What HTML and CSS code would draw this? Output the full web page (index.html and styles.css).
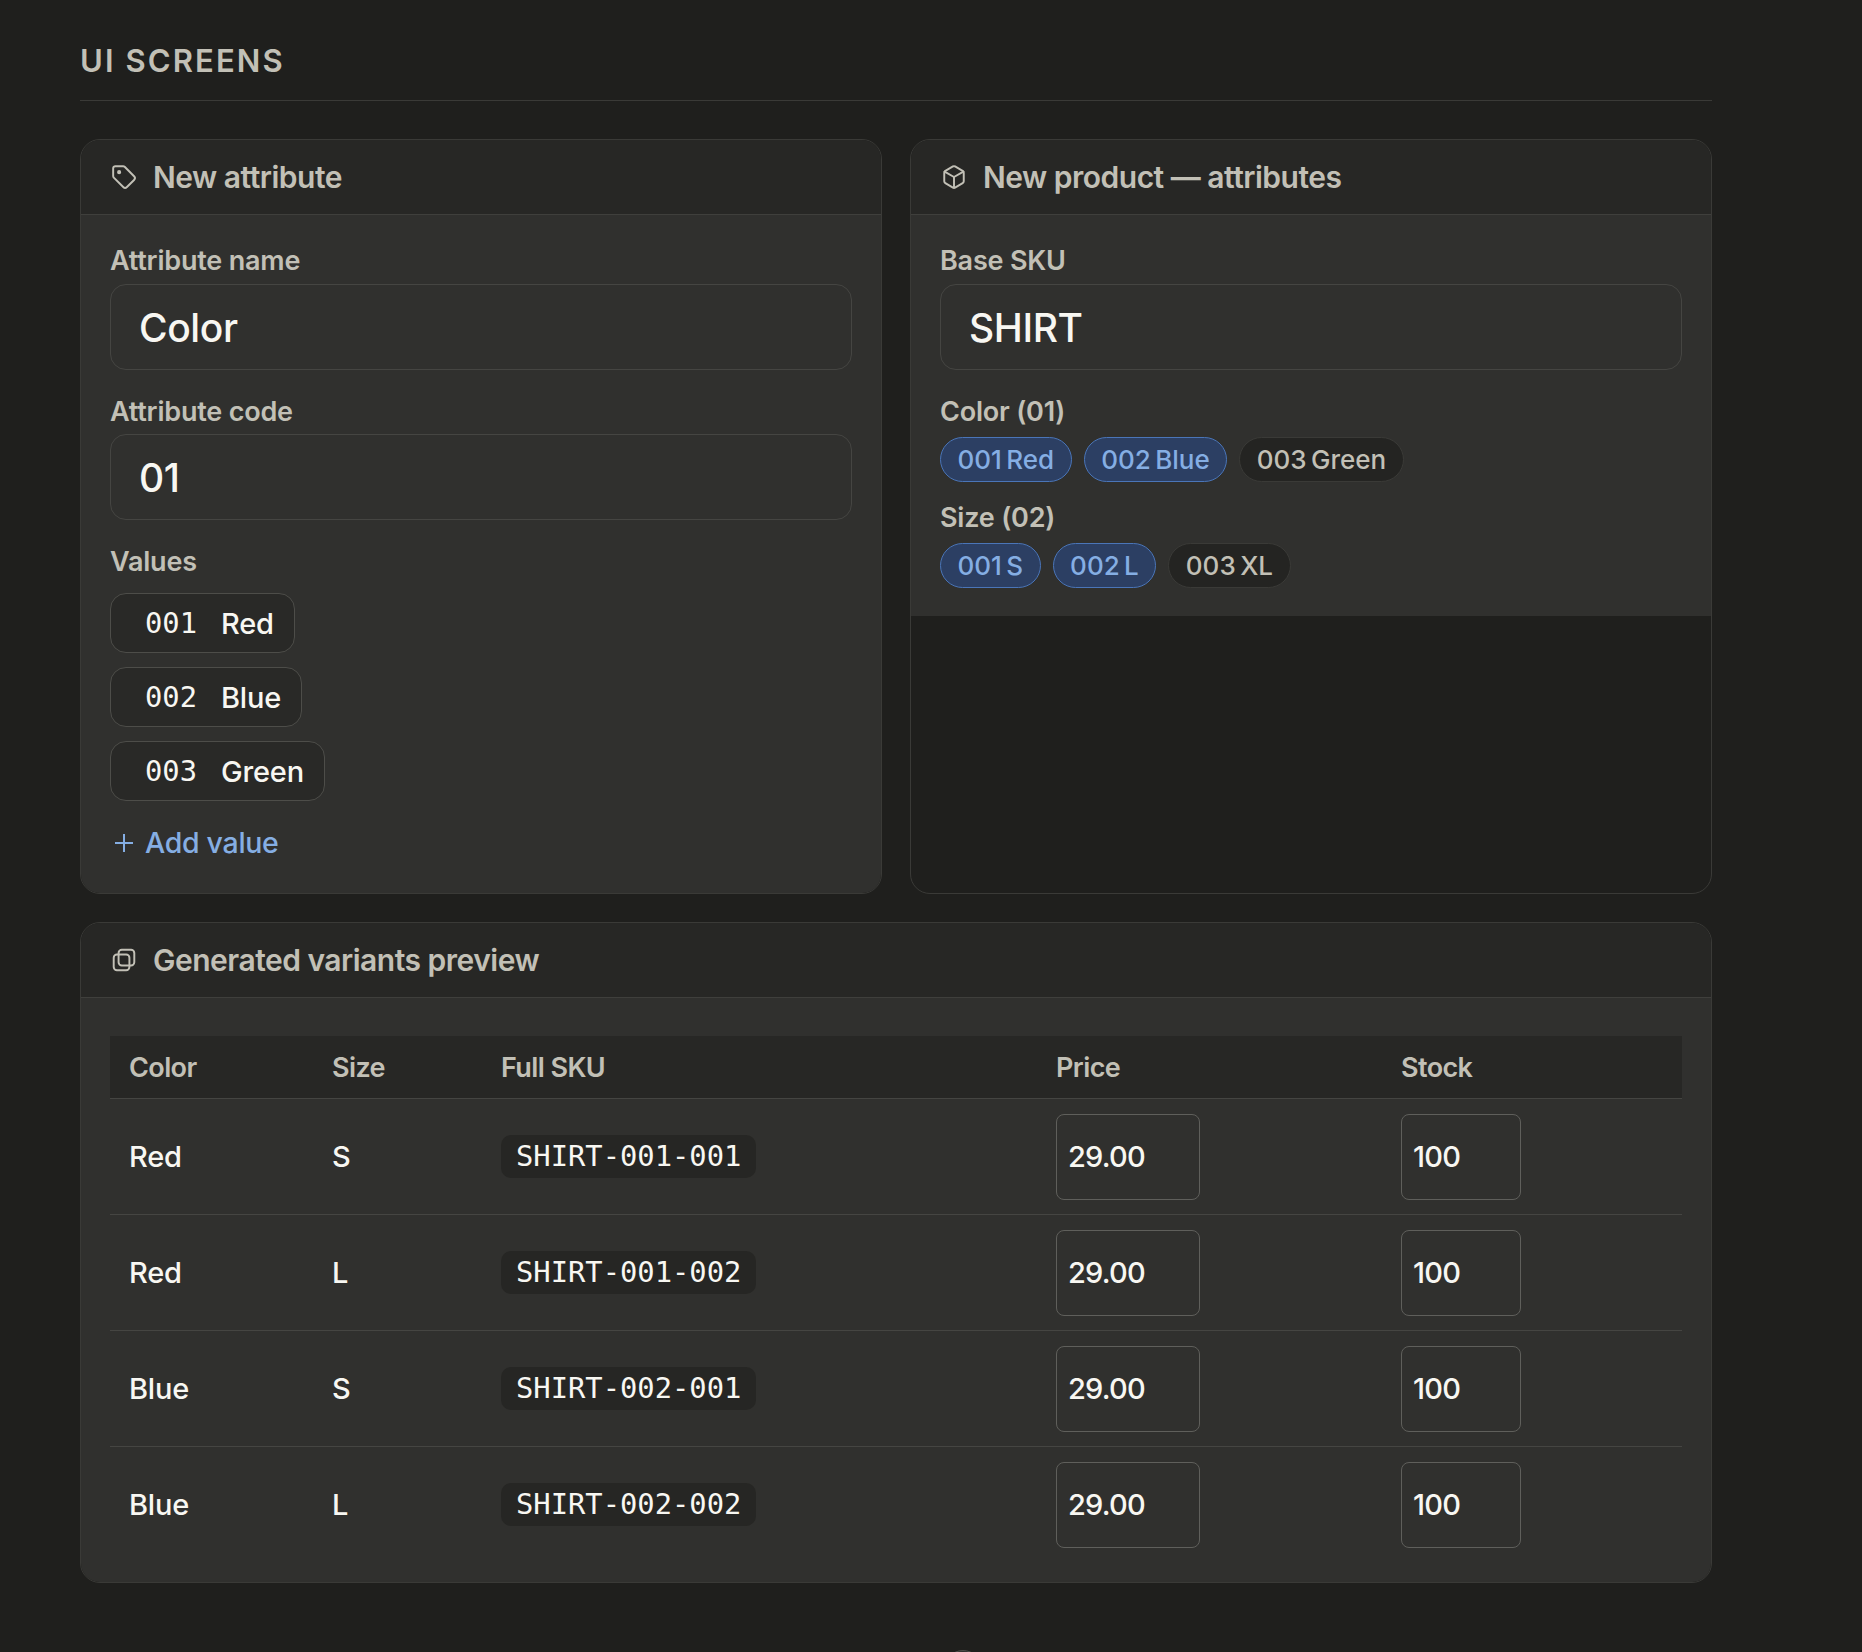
FILE: index.html
```html
<!DOCTYPE html>
<html lang="en">
<head>
  <meta charset="UTF-8">
  <title>UI screens</title>
  <link rel="stylesheet" href="styles.css">
</head>
<body>
  <h2 class="section-title">UI SCREENS</h2>

  <div class="two-col">
    <div class="card">
      <div class="card-head">
        <svg class="icon" viewBox="0 0 24 24"><path d="M12.586 2.586A2 2 0 0 0 11.172 2H4a2 2 0 0 0-2 2v7.172a2 2 0 0 0 .586 1.414l8.704 8.704a2.426 2.426 0 0 0 3.42 0l6.58-6.58a2.426 2.426 0 0 0 0-3.42z"/><circle class="dot" cx="7.500" cy="7.500" r="1"/></svg>
        New attribute
      </div>
      <div class="card-body">
        <label class="field-label">Attribute name</label>
        <div class="input">Color</div>
        <label class="field-label">Attribute code</label>
        <div class="input">01</div>
        <label class="field-label">Values</label>
        <div class="values">
          <div class="value-row"><code>001</code>Red</div>
          <div class="value-row"><code>002</code>Blue</div>
          <div class="value-row"><code>003</code>Green</div>
        </div>
        <div class="add-value"><svg viewBox="0 0 24 24"><path d="M12 3v18M3 12h18"/></svg>Add value</div>
      </div>
    </div>

    <div class="card">
      <div class="card-head">
        <svg class="icon" viewBox="0 0 24 24"><path d="M21 8a2 2 0 0 0-1-1.730l-7-4a2 2 0 0 0-2 0l-7 4A2 2 0 0 0 3 8v8a2 2 0 0 0 1 1.730l7 4a2 2 0 0 0 2 0l7-4A2 2 0 0 0 21 16Z"/><path d="m3.300 7 8.700 5 8.700-5"/><path d="M12 22V12"/></svg>
        New product — attributes
      </div>
      <div class="card-body">
        <label class="field-label">Base SKU</label>
        <div class="input">SHIRT</div>
        <label class="field-label">Color (01)</label>
        <div class="chips">
          <span class="chip on">001 Red</span>
          <span class="chip on">002 Blue</span>
          <span class="chip">003 Green</span>
        </div>
        <label class="field-label">Size (02)</label>
        <div class="chips">
          <span class="chip on">001 S</span>
          <span class="chip on">002 L</span>
          <span class="chip">003 XL</span>
        </div>
      </div>
    </div>
  </div>

  <div class="card wide">
    <div class="card-head">
      <svg class="icon" viewBox="0 0 24 24"><rect x="2.500" y="7" width="14.500" height="14.500" rx="3"/><rect x="7" y="2.500" width="14.500" height="14.500" rx="3"/></svg>
      Generated variants preview
    </div>
    <div class="card-body table-body">
      <table>
        <thead>
          <tr><th class="c1">Color</th><th class="c2">Size</th><th class="c3">Full SKU</th><th class="c4">Price</th><th>Stock</th></tr>
        </thead>
        <tbody>
          <tr><td>Red</td><td>S</td><td><code class="sku">SHIRT-001-001</code></td><td><div class="cell-input price">29.00</div></td><td><div class="cell-input stock">100</div></td></tr>
          <tr><td>Red</td><td>L</td><td><code class="sku">SHIRT-001-002</code></td><td><div class="cell-input price">29.00</div></td><td><div class="cell-input stock">100</div></td></tr>
          <tr><td>Blue</td><td>S</td><td><code class="sku">SHIRT-002-001</code></td><td><div class="cell-input price">29.00</div></td><td><div class="cell-input stock">100</div></td></tr>
          <tr><td>Blue</td><td>L</td><td><code class="sku">SHIRT-002-002</code></td><td><div class="cell-input price">29.00</div></td><td><div class="cell-input stock">100</div></td></tr>
        </tbody>
      </table>
    </div>
  </div>

  <div class="round-btn"></div>
</body>
</html>
```

FILE: styles.css
```css
html, body {
  margin: 0;
  background-color: #1f1f1d;
}

body {
  position: relative;
  width: 1632px;
  padding: 40px 150px 0 80px;
  height: 1612px;
  overflow: hidden;
  font-family: Inter, "Liberation Sans", sans-serif;
  color: #f8f7f2;
}

.section-title {
  margin: 0 0 38px;
  padding-top: 1px;
  padding-bottom: 19px;
  border-bottom: 1px solid #3a3a37;
  font-size: 31px;
  line-height: 40px;
  font-weight: 600;
  letter-spacing: 2.100px;
  color: #c2c0b6;
}

.two-col {
  display: grid;
  grid-template-columns: 1fr 1fr;
  gap: 28px;
  margin-bottom: 28px;
}

.two-col .card {
  height: 755px;
  box-sizing: border-box;
}

.card {
  border: 1px solid #3a3a37;
  border-radius: 20px;
  overflow: hidden;
}

.card-head {
  display: flex;
  align-items: center;
  gap: 16px;
  height: 75px;
  padding: 0 28px 0 30px;
  box-sizing: border-box;
  background-color: #272725;
  border-bottom: 1px solid #3f3f3c;
  font-size: 30px;
  font-weight: 600;
  letter-spacing: -0.500px;
  color: #c2c0b6;
}

.icon {
  width: 26px;
  height: 26px;
  flex-shrink: 0;
  fill: none;
  stroke: #c2c0b6;
  stroke-width: 1.800;
  stroke-linejoin: round;
  stroke-linecap: round;
}

.icon .dot {
  fill: #c2c0b6;
}

.card-body {
  padding: 28px 29px;
  background-color: #30302e;
}

.field-label {
  display: block;
  font-size: 27px;
  line-height: 36px;
  font-weight: 600;
  letter-spacing: -0.200px;
  color: #c2c0b6;
  margin-bottom: 5px;
}

.input + .field-label {
  margin-bottom: 4px;
}

.input {
  height: 86px;
  box-sizing: border-box;
  padding: 0 28px;
  display: flex;
  align-items: center;
  margin-bottom: 24px;
  border: 1px solid #454542;
  border-radius: 16px;
  font-size: 39px;
  letter-spacing: -0.400px;
  font-weight: 500;
  color: #f8f7f2;
}

.values {
  display: flex;
  flex-direction: column;
  align-items: flex-start;
  gap: 14px;
  margin-top: 13px;
}

.value-row {
  display: flex;
  align-items: center;
  height: 60px;
  box-sizing: border-box;
  padding: 0 20px 0 34px;
  border: 1px solid #4d4d49;
  border-radius: 16px;
  background-color: #292927;
  font-size: 29px;
  font-weight: 500;
  letter-spacing: -0.200px;
}

.value-row code {
  font-family: "DejaVu Sans Mono", monospace;
  font-size: 28.800px;
  letter-spacing: 0;
  margin-right: 24px;
}

.add-value {
  display: flex;
  align-items: center;
  gap: 9px;
  margin-top: 20px;
  font-size: 28.500px;
  font-weight: 500;
  letter-spacing: -0.300px;
  line-height: 44px;
  color: #85aee3;
}

.add-value svg {
  width: 24px;
  height: 24px;
  margin-left: 2px;
  fill: none;
  stroke: #85aee3;
  stroke-width: 2;
}

.chips {
  display: flex;
  gap: 12px;
  margin-top: 7px;
  margin-bottom: 18px;
}

.chips:last-child {
  margin-bottom: 0;
}

.chip {
  height: 45px;
  box-sizing: border-box;
  display: flex;
  align-items: center;
  padding: 0 16.500px;
  border: 1px solid #3a3a37;
  border-radius: 23px;
  background-color: #242422;
  font-size: 26px;
  font-weight: 500;
  word-spacing: -2.500px;
  color: #c2c0b6;
}

.chip.on {
  background-color: #2c3f63;
  border-color: #4a75b8;
  color: #85aee3;
}

.table-body {
  padding-top: 38px;
  padding-bottom: 20px;
}

table {
  width: 100%;
  table-layout: fixed;
  border-collapse: collapse;
}

th {
  height: 62px;
  padding: 0 19px;
  text-align: left;
  background-color: #272725;
  border-bottom: 1px solid #454542;
  font-size: 27px;
  font-weight: 600;
  letter-spacing: -0.600px;
  color: #c2c0b6;
}

.c1 { width: 165px; }
.c2 { width: 131px; }
.c3 { width: 517px; }
.c4 { width: 307px; }

td {
  height: 115px;
  padding: 0 19px;
  border-bottom: 1px solid #454542;
  font-size: 29px;
  font-weight: 500;
  letter-spacing: -0.200px;
  color: #f8f7f2;
}

tbody tr:last-child td {
  border-bottom: 0;
}

.sku {
  display: inline-block;
  padding: 4px 15px 5px;
  border-radius: 10px;
  background-color: #262624;
  font-family: "DejaVu Sans Mono", monospace;
  font-size: 28.800px;
  letter-spacing: 0;
}

.cell-input {
  height: 86px;
  box-sizing: border-box;
  display: flex;
  align-items: center;
  padding: 0 11px;
  border: 1px solid #5f5f5b;
  border-radius: 8px;
  font-size: 29px;
  letter-spacing: -0.800px;
}

.price { width: 144px; }
.stock { width: 120px; }

.round-btn {
  position: absolute;
  left: 944px;
  top: 1650px;
  width: 38px;
  height: 38px;
  box-sizing: border-box;
  border: 1px solid #4d4d49;
  border-radius: 50%;
  background-color: #30302e;
}
```
